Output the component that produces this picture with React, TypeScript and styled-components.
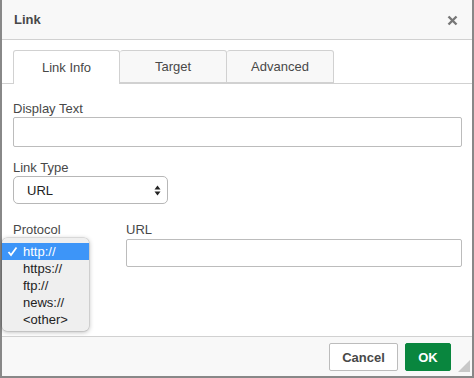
import styled, { createGlobalStyle } from "styled-components";

const GlobalStyle = createGlobalStyle`
  html, body {
    margin: 0;
    padding: 0;
    background: #888;
    font-family: "Liberation Sans", Arial, sans-serif;
  }
`;

const Page = styled.div`
  width: 474px;
  height: 378px;
  padding: 0 2px 2px 2px;
  box-sizing: border-box;
  overflow: hidden;
`;

const Dialog = styled.div`
  position: relative;
  width: 470px;
  height: 376px;
  background: #fff;
  display: flex;
  flex-direction: column;
  color: #484848;
  font-size: 13px;
`;

const TitleBar = styled.div`
  height: 39px;
  background: #f8f8f8;
  border-bottom: 1px solid #d1d1d1;
  display: flex;
  align-items: center;
  justify-content: space-between;
  padding: 0 14px 0 12px;
  font-weight: bold;
  font-size: 13px;
  color: #484848;
`;

const Close = styled.svg`
  width: 11px;
  height: 11px;
  margin-top: 2px;
`;

const Tabs = styled.div`
  display: flex;
  margin-top: 10px;
  padding-left: 11px;
  border-bottom: 1px solid #d1d1d1;
  height: 33px;
`;

const Tab = styled.div<{ $active?: boolean }>`
  width: 107px;
  height: ${(p) => (p.$active ? "34px" : "33px")};
  box-sizing: border-box;
  border: 1px solid #d1d1d1;
  border-bottom: ${(p) => (p.$active ? "none" : "1px solid #d1d1d1")};
  border-left: ${(p) => (p.$active ? "1px solid #d1d1d1" : "none")};
  border-radius: 3px 3px 0 0;
  background: ${(p) => (p.$active ? "#fff" : "#f8f8f8")};
  display: flex;
  align-items: center;
  justify-content: center;
  padding-bottom: 1px;
  font-size: 13px;
  color: #484848;
`;

const Body = styled.div`
  position: relative;
  flex: 1;
  padding: 17px 10px 0 11px;
  display: flex;
  flex-direction: column;
`;

const Field = styled.div<{ $gap?: number; $mb?: number }>`
  display: flex;
  flex-direction: column;
  gap: ${(p) => p.$gap ?? 0}px;
  margin-bottom: ${(p) => p.$mb ?? 0}px;
  min-width: 0;
`;

const Label = styled.label`
  font-size: 13px;
  line-height: 16px;
  color: #484848;
`;

const TextInput = styled.div<{ $h: number }>`
  height: ${(p) => p.$h}px;
  box-sizing: border-box;
  border: 1px solid #bcbcbc;
  border-radius: 2px;
  background: #fff;
`;

const Select = styled.div`
  width: 155px;
  height: 28px;
  box-sizing: border-box;
  border: 1px solid #b7b7b7;
  border-radius: 5px;
  background: #fff;
  display: flex;
  align-items: center;
  justify-content: space-between;
  padding: 0 6px 0 13px;
  font-size: 13px;
  color: #222;
`;

const Row = styled.div`
  display: grid;
  grid-template-columns: 113px 336px;
`;

const Popup = styled.div`
  position: absolute;
  left: 0;
  top: 154px;
  width: 87px;
  padding: 5px 0 3px;
  background: #efefef;
  border-radius: 5px;
  box-shadow: 0 1px 5px rgba(0, 0, 0, 0.3), 0 0 0 0.5px rgba(0, 0, 0, 0.15);
  font-size: 13px;
  color: #222;
`;

const Option = styled.div<{ $selected?: boolean }>`
  height: 17px;
  line-height: 18px;
  padding-left: 21px;
  position: relative;
  background: ${(p) => (p.$selected ? "#3d95f8" : "transparent")};
  color: ${(p) => (p.$selected ? "#fff" : "#222")};
`;

const Check = styled.svg`
  position: absolute;
  left: 5px;
  top: 3px;
  width: 11px;
  height: 11px;
`;

const Footer = styled.div`
  height: 38px;
  background: #f8f8f8;
  border-top: 1px solid #d1d1d1;
  display: flex;
  align-items: center;
  justify-content: flex-end;
  gap: 7px;
  padding: 1px 21px 0 0;
  position: relative;
`;

const Button = styled.div<{ $primary?: boolean }>`
  height: 28px;
  width: ${(p) => (p.$primary ? "46px" : "69px")};
  box-sizing: border-box;
  display: flex;
  align-items: center;
  justify-content: center;
  border-radius: 2px;
  font-weight: bold;
  font-size: 13px;
  background: ${(p) => (p.$primary ? "#09863e" : "#fff")};
  color: ${(p) => (p.$primary ? "#fff" : "#484848")};
  border: 1px solid ${(p) => (p.$primary ? "#09863e" : "#bcbcbc")};
`;

const Grip = styled.svg`
  position: absolute;
  right: 2px;
  bottom: 4px;
  width: 12px;
  height: 12px;
`;

const protocols = ["http://", "https://", "ftp://", "news://", "<other>"];

export default function App() {
  return (
    <Page>
      <GlobalStyle />
      <Dialog>
        <TitleBar>
          <span>Link</span>
          <Close viewBox="0 0 11 11">
            <path d="M1.5 1.5 L9.5 9.5 M9.5 1.5 L1.5 9.5" stroke="#777" strokeWidth="2.4" />
          </Close>
        </TitleBar>
        <Tabs>
          <Tab $active>Link Info</Tab>
          <Tab>Target</Tab>
          <Tab>Advanced</Tab>
        </Tabs>
        <Body>
          <Field $mb={13}>
            <Label>Display Text</Label>
            <TextInput $h={30} />
          </Field>
          <Field $mb={18}>
            <Label>Link Type</Label>
            <Select>
              <span>URL</span>
              <svg width="7" height="11" viewBox="0 0 7 11">
                <path d="M3.5 0.5 L6.5 4.5 L0.5 4.5 Z M3.5 10.5 L6.5 6.5 L0.5 6.5 Z" fill="#222" />
              </svg>
            </Select>
          </Field>
          <Row>
            <Field>
              <Label>Protocol</Label>
            </Field>
            <Field $gap={1}>
              <Label>URL</Label>
              <TextInput $h={28} />
            </Field>
          </Row>
          <Popup>
            {protocols.map((p, i) => (
              <Option key={p} $selected={i === 0}>
                {i === 0 && (
                  <Check viewBox="0 0 11 11">
                    <path d="M1.5 6 L4 9 L9.5 1.5" stroke="#fff" strokeWidth="1.8" fill="none" />
                  </Check>
                )}
                {p}
              </Option>
            ))}
          </Popup>
        </Body>
        <Footer>
          <Button>Cancel</Button>
          <Button $primary>OK</Button>
          <Grip viewBox="0 0 12 12">
            <path d="M12 0 L12 12 L0 12 Z" fill="#c8c8c8" />
          </Grip>
        </Footer>
      </Dialog>
    </Page>
  );
}
